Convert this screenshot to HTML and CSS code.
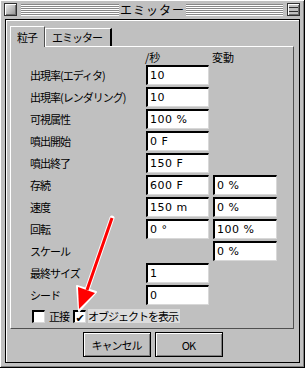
FILE: index.html
```html
<!DOCTYPE html>
<html lang="ja">
<head>
    <meta charset="UTF-8">
    <title>エミッター</title>
    <link rel="stylesheet" href="styles.css">
</head>
<body>
    <div class="window">
        <div class="titlebar">
            <span class="close-box"></span>
            <span class="stripes"></span>
            <span class="title">エミッター</span>
            <span class="stripes"></span>
            <span class="zoom-box"></span>
        </div>

        <div class="content">
            <div class="tabs">
                <div class="tab active">粒子</div>
                <div class="tab">エミッター</div>
            </div>

            <div class="panel">
                <div class="row head">
                    <span></span>
                    <span class="col-head">/秒</span>
                    <span class="col-head">変動</span>
                </div>
                <div class="row"><span class="label">出現率(エディタ)</span><input type="text" value="10"><span></span></div>
                <div class="row"><span class="label">出現率(レンダリング)</span><input type="text" value="10"><span></span></div>
                <div class="row"><span class="label">可視属性</span><input type="text" value="100 %"><span></span></div>
                <div class="row"><span class="label">噴出開始</span><input type="text" value="0 F"><span></span></div>
                <div class="row"><span class="label">噴出終了</span><input type="text" value="150 F"><span></span></div>
                <div class="row"><span class="label">存続</span><input type="text" value="600 F"><input type="text" value="0 %"></div>
                <div class="row"><span class="label">速度</span><input type="text" value="150 m"><input type="text" value="0 %"></div>
                <div class="row"><span class="label">回転</span><input type="text" value="0 °"><input type="text" value="100 %"></div>
                <div class="row"><span class="label">スケール</span><span></span><input type="text" value="0 %"></div>
                <div class="row"><span class="label">最終サイズ</span><input type="text" value="1"><span></span></div>
                <div class="row"><span class="label">シード</span><input type="text" value="0"><span></span></div>

                <div class="checks">
                    <span class="checkbox"></span>
                    <span class="check-label">正接</span>
                    <span class="checkbox checked">&#10004;</span>
                    <span class="check-label focus">オブジェクトを表示</span>
                </div>
            </div>

            <div class="buttons">
                <button>キャンセル</button>
                <button>OK</button>
            </div>
        </div>

        <!-- callout arrow drawn over the dialog -->
        <svg class="arrow" width="305" height="368" viewBox="0 0 305 368">
            <line x1="112" y1="218" x2="87" y2="290" stroke="#fff" stroke-width="5" stroke-linecap="round"/>
            <polygon points="79,311 77,286 96,292" fill="#fff" stroke="#fff" stroke-width="2" stroke-linejoin="round"/>
            <line x1="112" y1="218" x2="87" y2="290" stroke="#f00" stroke-width="3"/>
            <polygon points="79,309 78,287 95,293" fill="#f00"/>
        </svg>
    </div>
</body>
</html>
```

FILE: styles.css
```css
body {
    margin: 0;
    background-color: #c0c0c0;
    font-family: "Noto Sans CJK JP", "DejaVu Sans", sans-serif;
    font-size: 11px;
    color: #000;
}

.window {
    position: relative;
    width: 305px;
    height: 368px;
    box-sizing: border-box;
    padding: 0 4px 4px 5px;
    background-color: #c0c0c0;
    border-right: 1px solid #000;
    border-bottom: 1px solid #000;
    box-shadow: inset 1px 1px #fff, inset -1px -1px #808080;
}

.titlebar {
    height: 19px;
    display: flex;
    align-items: center;
    margin-left: -1px;
}

.close-box,
.zoom-box {
    flex: none;
    width: 11px;
    height: 11px;
    border: 1px solid #303030;
    background: linear-gradient(135deg, #f0f0f0, #909090);
    box-shadow: inset 1px 1px #fff, inset -1px -1px #707070;
}

.zoom-box {
    background: repeating-linear-gradient(to bottom, #c0c0c0 0 3px, #303030 3px 4px);
    background-color: #c0c0c0;
}

.stripes {
    flex: none;
    height: 12px;
    background: repeating-linear-gradient(to bottom, #888 0 1px, #fff 1px 2px);
}

.titlebar .close-box { margin-right: 4px; }
.titlebar .stripes:nth-child(2) { width: 98px; }
.titlebar .stripes:nth-child(4) { width: 97px; }
.titlebar .zoom-box { margin-left: 4px; }

.title {
    flex: none;
    width: 67px;
    text-align: center;
    white-space: nowrap;
    font-size: 12px;
    letter-spacing: 1px;
    line-height: 14px;
}

.content {
    height: 344px;
    box-sizing: border-box;
    border: 1px solid #000;
    box-shadow: inset 1px 1px #fff;
    padding: 6px 4px 0 4px;
}

.tabs {
    display: flex;
    align-items: flex-end;
    height: 20px;
}

.tab {
    height: 18px;
    box-sizing: border-box;
    padding: 0 8px 0 6px;
    line-height: 17px;
    font-size: 11px;
    letter-spacing: -1px;
    white-space: nowrap;
    border-top: 1px solid #fff;
    border-left: 1px solid #fff;
    border-right: 2px solid #000;
}

.tab.active {
    height: 21px;
    width: 35px;
    margin-bottom: -1px;
    padding: 2px 0 0 6px;
    border-right: 1px solid #505050;
    background-color: #c0c0c0;
    position: relative;
    z-index: 1;
}

.panel {
    width: 284px;
    height: 283px;
    box-sizing: border-box;
    border-top: 1px solid #fff;
    border-left: 1px solid #fff;
    border-right: 1px solid #505050;
    border-bottom: 1px solid #505050;
    padding: 4px 0 0 19px;
}

.row {
    display: grid;
    grid-template-columns: 112px 63px 64px;
    column-gap: 4px;
    height: 20px;
    margin-bottom: 2px;
    align-items: center;
}

.row.head {
    height: 14px;
    margin-bottom: 0;
    align-items: start;
}

.col-head {
    margin-left: -1px;
    line-height: 12px;
}

.label {
    letter-spacing: -1px;
    white-space: nowrap;
}

input[type="text"] {
    width: 100%;
    height: 20px;
    box-sizing: border-box;
    margin: 0;
    padding: 0 0 0 2px;
    font-family: "DejaVu Sans", sans-serif;
    font-size: 11px;
    letter-spacing: 0.5px;
    color: #000;
    background-color: #fff;
    border-style: solid;
    border-width: 2px 1px 1px 2px;
    border-color: #000 #d8d8d8 #d8d8d8 #000;
    outline: none;
}

.checks {
    display: flex;
    align-items: center;
    height: 14px;
    margin: 4px 0 0 2px;
}

.checkbox {
    width: 13px;
    height: 13px;
    box-sizing: border-box;
    background-color: #fff;
    border-style: solid;
    border-width: 2px 1px 1px 2px;
    border-color: #000 #d8d8d8 #d8d8d8 #000;
    font-size: 11px;
    line-height: 10px;
    text-align: center;
}

.check-label {
    letter-spacing: -1px;
    margin-left: 4px;
    margin-right: 4px;
    line-height: 14px;
}

.check-label.focus {
    background-color: #dcdcdc;
    padding: 0 2px 0 0;
    margin-left: 2px;
}

.buttons {
    display: flex;
    justify-content: center;
    gap: 4px;
    margin-top: 3px;
}

button {
    width: 68px;
    height: 25px;
    font-family: "Noto Sans CJK JP", "DejaVu Sans", sans-serif;
    font-size: 11px;
    letter-spacing: -1px;
    background-color: #c0c0c0;
    border: 1px solid #000;
    box-shadow: inset 1px 1px #fff, inset -1px -1px #808080;
    padding: 0;
    color: #000;
}

.arrow {
    position: absolute;
    left: 0;
    top: 0;
}
```
